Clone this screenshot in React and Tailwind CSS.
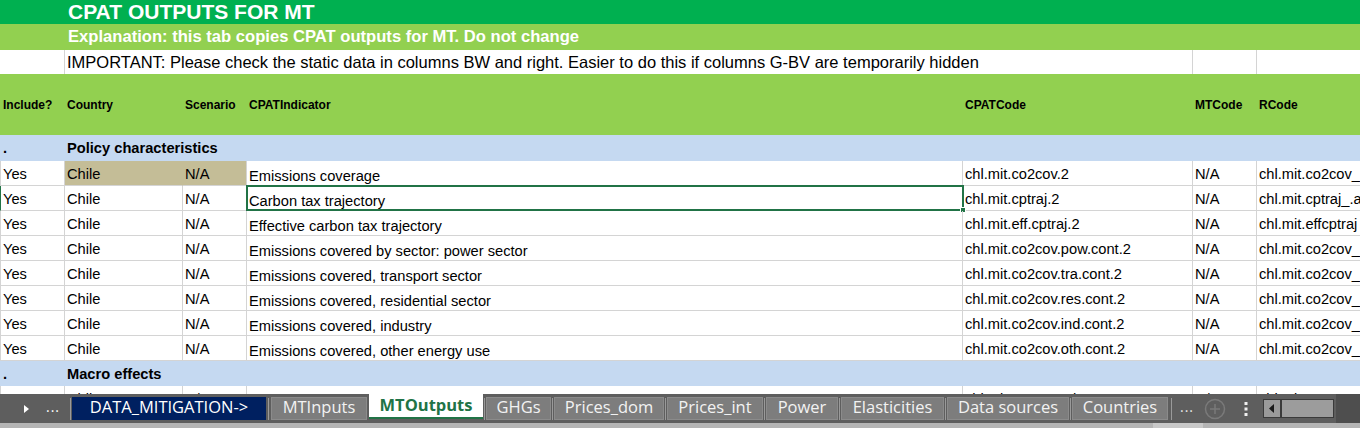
import React from "react";

const F = { fontFamily: '"Liberation Sans", Arial, sans-serif' };
const TF = { fontFamily: '"Open Sans", "Noto Sans", sans-serif' };

const GRID = "grid grid-cols-[65px_118px_64px_716px_230px_64px_103px]";

const rows = [
  ["Emissions coverage", "chl.mit.co2cov.2", "chl.mit.co2cov_"],
  ["Carbon tax trajectory", "chl.mit.cptraj.2", "chl.mit.cptraj_.a"],
  ["Effective carbon tax trajectory", "chl.mit.eff.cptraj.2", "chl.mit.effcptraj"],
  ["Emissions covered by sector: power sector", "chl.mit.co2cov.pow.cont.2", "chl.mit.co2cov_"],
  ["Emissions covered, transport sector", "chl.mit.co2cov.tra.cont.2", "chl.mit.co2cov_"],
  ["Emissions covered, residential sector", "chl.mit.co2cov.res.cont.2", "chl.mit.co2cov_"],
  ["Emissions covered, industry", "chl.mit.co2cov.ind.cont.2", "chl.mit.co2cov_"],
  ["Emissions covered, other energy use", "chl.mit.co2cov.oth.cont.2", "chl.mit.co2cov_"],
];

function Cell({ children, className = "", lower = false }) {
  return (
    <div
      className={`h-[25px] border-r border-b border-[#d4d4d4] pl-[2px] ${lower ? "pt-[7px]" : "pt-[5px]"} text-[14.67px] leading-[17px] text-black whitespace-nowrap overflow-hidden ${className}`}
    >
      {children}
    </div>
  );
}

function DataRow({ r, i }) {
  const first = i === 0;
  const sel = i === 1;
  return (
    <div className={GRID}>
      <Cell className={sel ? "border-l border-l-[#217346]" : "border-l border-l-[#d4d4d4]"}>Yes</Cell>
      <Cell className={first ? "bg-[#c4bd97] border-r-[#c4bd97]" : ""}>Chile</Cell>
      <Cell className={first ? "bg-[#c4bd97]" : ""}>N/A</Cell>
      <div className="relative">
        <Cell lower>{r[0]}</Cell>
        {sel && (
          <div className="absolute left-[-1px] top-[-1px] right-[-1px] bottom-[0px] border-2 border-[#217346]">
            <div className="absolute right-[-4px] bottom-[-4px] w-[6px] h-[6px] bg-[#217346] border border-white" />
          </div>
        )}
      </div>
      <Cell>{r[1]}</Cell>
      <Cell>N/A</Cell>
      <Cell className="border-r-0">{r[2]}</Cell>
    </div>
  );
}

function Section({ label, h }) {
  return (
    <div className={`${h} bg-[#c5d9f1] flex text-[14.67px] leading-[17px] font-bold text-black pt-[5px]`}>
      <div className="w-[65px] pl-[3px]">.</div>
      <div className="pl-[2px]">{label}</div>
    </div>
  );
}

function Tab({ children, className = "" }) {
  return (
    <div className={`mt-[3px] h-[23px] flex items-center justify-center text-[16.5px] leading-none text-[#f2f2f2] bg-[#7d7d7d] border border-[#8b8b8b] ${className}`}>
      <span className="-mt-[2px]">{children}</span>
    </div>
  );
}

function Sep({ className = "mx-[1px]" }) {
  return <div className={`w-[1px] h-[22px] mt-[4px] bg-[#9a9a9a] ${className}`} />;
}

export default function App() {
  return (
    <div className="w-[1360px] h-[428px] overflow-hidden flex flex-col bg-white" style={F}>
      <div className="flex-1 overflow-hidden">
        {/* Title */}
        <div className="h-[24px] bg-[#00b050] flex items-center pl-[68px] text-[21px] font-bold text-white leading-[24px] whitespace-nowrap">
          CPAT OUTPUTS FOR MT
        </div>
        <div className="h-[26px] bg-[#92d050] flex items-center pl-[68px] text-[16.6px] font-bold text-white leading-[20px] whitespace-nowrap">
          Explanation: this tab copies CPAT outputs for MT. Do not change
        </div>
        <div className={`${GRID} h-[24px] text-[16.5px] leading-[24px] text-black`}>
          <div className="border-r border-[#d4d4d4]" />
          <div className="col-span-4 pl-[2px] whitespace-nowrap border-r border-[#d4d4d4]">
            IMPORTANT: Please check the static data in columns BW and right. Easier to do this if columns G-BV are temporarily hidden
          </div>
          <div className="border-r border-[#d4d4d4]" />
          <div />
        </div>
        {/* Header */}
        <div className={`${GRID} h-[61px] bg-[#92d050] items-center text-[12px] font-bold text-black`}>
          <div className="pl-[3px]">Include?</div>
          <div className="pl-[2px]">Country</div>
          <div className="pl-[2px]">Scenario</div>
          <div className="pl-[2px]">CPATIndicator</div>
          <div className="pl-[2px]">CPATCode</div>
          <div className="pl-[2px]">MTCode</div>
          <div className="pl-[2px]">RCode</div>
        </div>
        <Section label="Policy characteristics" h="h-[26px]" />
        {rows.map((r, i) => (
          <DataRow key={i} r={r} i={i} />
        ))}
        <Section label="Macro effects" h="h-[25px]" />
        <DataRow r={["Emissions covered, other energy use", "chl.mit.co2cov.oth.cont.2", "chl.mit.co2cov_"]} i={9} />
      </div>

      {/* Tab bar */}
      <div className="h-[34px] bg-[#5e5e5e] flex flex-col" style={TF}>
        <div className="h-[29px] flex items-start">
          <div className="w-[70px] h-[29px] flex items-center text-white">
            <svg width="8" height="10" viewBox="0 0 8 10" className="ml-[23px]">
              <path d="M1 1 L6 5 L1 9 Z" fill="#ffffff" />
            </svg>
            <span className="ml-[15px] text-[14px] leading-none tracking-[1px] -mt-[3px]">...</span>
          </div>
          <Sep className="mr-[1px]" />
          <Tab className="w-[194px] bg-[#002060] border-[#002060] text-white">DATA_MITIGATION-&gt;</Tab>
          <Sep className="mx-[2px]" />
          <Tab className="w-[96px]">MTInputs</Tab>
          <div className="w-[114px] h-[25px] ml-[2px] bg-white flex items-center justify-center text-[16.5px] leading-none font-bold text-[#217346] border-b-2 border-[#217346]">
            <span className="-mt-[1px]">MTOutputs</span>
          </div>
          <Sep />
          <Tab className="w-[65px]">GHGs</Tab>
          <Sep />
          <Tab className="w-[110px]">Prices_dom</Tab>
          <Sep />
          <Tab className="w-[96px]">Prices_int</Tab>
          <Sep />
          <Tab className="w-[72px]">Power</Tab>
          <Sep />
          <Tab className="w-[103px]">Elasticities</Tab>
          <Sep />
          <Tab className="w-[122px]">Data sources</Tab>
          <Sep />
          <Tab className="w-[96px]">Countries</Tab>
          <Sep className="ml-[3px]" />
          <div className="h-[29px] flex items-center text-[#e8e8e8]">
            <span className="ml-[8px] text-[14px] leading-none tracking-[1px] -mt-[3px]">...</span>
            <svg width="22" height="22" viewBox="0 0 22 22" className="ml-[10px]">
              <circle cx="11" cy="11" r="9.5" fill="none" stroke="#7a7a7a" strokeWidth="1.5" />
              <path d="M11 6 V16 M6 11 H16" stroke="#7a7a7a" strokeWidth="1.5" />
            </svg>
            <svg width="4" height="14" viewBox="0 0 4 14" className="ml-[18px]">
              <rect x="0.5" y="0" width="3" height="3" fill="#f0f0f0" />
              <rect x="0.5" y="5.5" width="3" height="3" fill="#f0f0f0" />
              <rect x="0.5" y="11" width="3" height="3" fill="#f0f0f0" />
            </svg>
            <div className="ml-[15px] w-[71px] h-[19px] flex border border-[#3a3a3a] bg-[#9a9a9a]">
              <div className="w-[18px] h-full flex items-center justify-center border-r-2 border-[#3a3a3a]">
                <svg width="6" height="9" viewBox="0 0 6 9">
                  <path d="M5 0 L0 4.5 L5 9 Z" fill="#1a1a1a" />
                </svg>
              </div>
              <div className="flex-1 bg-[#9c9c9c]" />
            </div>
          </div>
          <div className="flex-1 h-[29px] ml-[2px] bg-[#4e4e4e]" />
        </div>
        <div className="h-[5px] bg-[#b5b5b5] flex">
          <div className="w-[1153px]" />
          <div className="w-[50px] bg-[#c9c9c9]" />
        </div>
      </div>
    </div>
  );
}
